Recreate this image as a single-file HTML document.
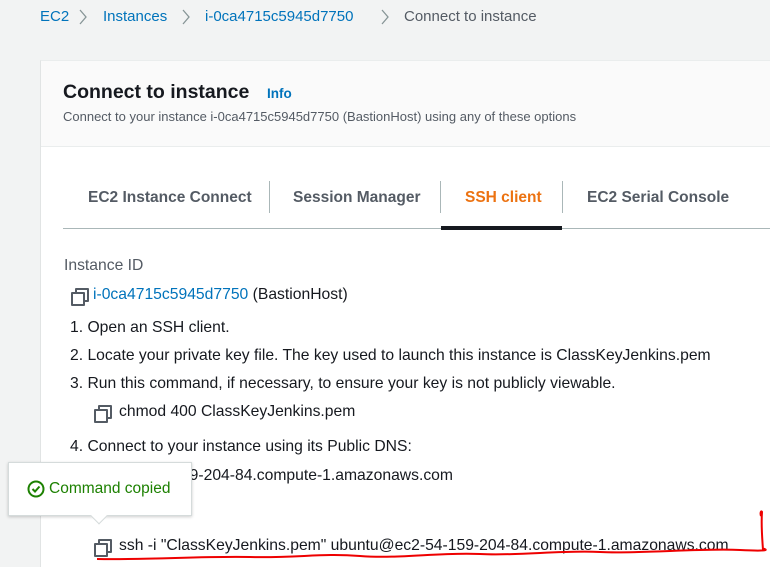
<!DOCTYPE html>
<html><head><meta charset="utf-8"><style>
*{margin:0;padding:0;box-sizing:border-box}
html,body{width:770px;height:567px;overflow:hidden}
body{background:#f2f3f3;font-family:"Liberation Sans",sans-serif;position:relative;color:#16191f}
.a{position:absolute;white-space:nowrap}
.bc{font-size:15px;top:8px;color:#0073bb}
.panel{position:absolute;left:40px;top:60px;width:740px;height:507px;background:#fff;border-left:1px solid #e1e4e4;border-top:1px solid #eaeded}
.hdr{position:absolute;left:0;top:0;width:100%;height:86px;background:#fafafa;border-bottom:1px solid #eaeded}
.tab{font-size:15.5px;font-weight:bold;color:#545b64;top:189px}
.vl{position:absolute;top:181px;width:1px;height:32px;background:#aab7b8}
.t{font-size:15.7px;color:#16191f}
.cp{position:absolute;width:14px;height:14px}
.cp:before,.cp:after{content:"";position:absolute;border:2px solid #545b64;width:10px;height:10px;border-radius:1px}
.cp:before{left:4px;top:0}
.cp:after{left:0;top:4px;background:#fff}
</style></head><body>
<div class="a bc" style="left:40px">EC2</div>
<div class="a bc" style="left:103px">Instances</div>
<div class="a bc" style="left:205px">i-0ca4715c5945d7750</div>
<div class="a bc" style="left:404px;color:#545b64">Connect to instance</div>
<svg class="a" style="left:0;top:0" width="400" height="30"><g fill="none" stroke="#879596" stroke-width="1.3"><path d="M80 10l6 7-6 7"/><path d="M183 10l6 7-6 7"/><path d="M382 10l6 7-6 7"/></g></svg>
<div class="panel"><div class="hdr"></div></div>
<div class="a" style="left:63px;top:81px;font-size:19.5px;font-weight:bold">Connect to instance</div>
<div class="a" style="left:267px;top:86px;font-size:13.5px;font-weight:bold;color:#0073bb">Info</div>
<div class="a" style="left:63px;top:109px;font-size:13px;color:#545b64">Connect to your instance i-0ca4715c5945d7750 (BastionHost) using any of these options</div>
<div class="a tab" style="left:88px">EC2 Instance Connect</div>
<div class="vl" style="left:269px"></div>
<div class="a tab" style="left:293px">Session Manager</div>
<div class="vl" style="left:440px"></div>
<div class="a tab" style="left:465px;color:#ec7211">SSH client</div>
<div class="vl" style="left:562px"></div>
<div class="a tab" style="left:587px">EC2 Serial Console</div>
<div class="a" style="left:63px;top:228px;width:710px;height:1px;background:#aab7b8"></div>
<div class="a" style="left:441px;top:226px;width:121px;height:4px;background:#16191f"></div>
<div class="a t" style="left:64px;top:257px;color:#545b64">Instance ID</div>
<div class="cp" style="left:71px;top:288px"></div>
<div class="a t" style="left:93px;top:286px"><span style="color:#0073bb">i-0ca4715c5945d7750</span> (BastionHost)</div>
<div class="a t" style="left:70px;top:319px">1. Open an SSH client.</div>
<div class="a t" style="left:70px;top:347px">2. Locate your private key file. The key used to launch this instance is ClassKeyJenkins.pem</div>
<div class="a t" style="left:70px;top:375px">3. Run this command, if necessary, to ensure your key is not publicly viewable.</div>
<div class="cp" style="left:94px;top:405px"></div>
<div class="a t" style="left:119px;top:403px">chmod 400 ClassKeyJenkins.pem</div>
<div class="a t" style="left:70px;top:438px">4. Connect to your instance using its Public DNS:</div>
<div class="a t" style="left:119px;top:467px">ec2-54-159-204-84.compute-1.amazonaws.com</div>
<div class="cp" style="left:94px;top:539px"></div>
<div class="a t" style="left:119px;top:537px">ssh -i "ClassKeyJenkins.pem" ubuntu@ec2-54-159-204-84.compute-1.amazonaws.com</div>
<div class="a" style="left:8px;top:462px;width:184px;height:54px;background:#fff;border:1px solid #d5dbdb;box-shadow:0 1px 3px rgba(0,0,0,.2)"></div>
<div class="a" style="left:93px;top:510px;width:12px;height:12px;background:#fff;transform:rotate(45deg);border-right:1px solid #d5dbdb;border-bottom:1px solid #d5dbdb"></div>
<svg class="a" style="left:27px;top:480px" width="18" height="18" viewBox="0 0 18 18"><circle cx="9" cy="9" r="7.5" fill="none" stroke="#1d8102" stroke-width="2"/><path d="M5.5 9l2.5 2.5 4.5-5" fill="none" stroke="#1d8102" stroke-width="2"/></svg>
<div class="a" style="left:49px;top:480px;font-size:15.5px;color:#1d8102">Command copied</div>
<svg class="a" style="left:0;top:0" width="770" height="567"><path d="M97 559 C150 560,200 556,250 557 S320 553,360 556 S440 552,480 554 S560 550,600 552 S700 548,740 550 S760 548,765 549 M763 550 C762 535,761 525,762 512 C761 510,760 513,761 516" fill="none" stroke="#e00" stroke-width="2"/></svg>
</body></html>
